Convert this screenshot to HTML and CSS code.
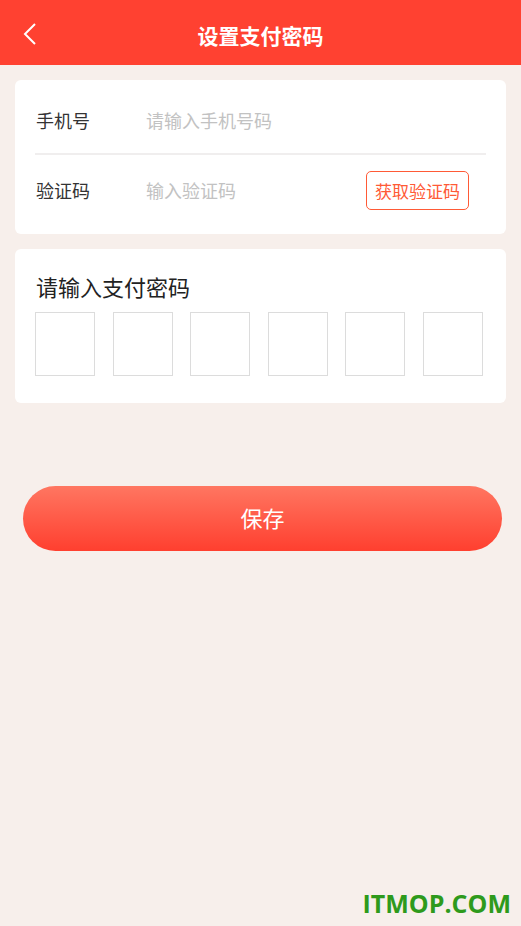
FILE: index.html
```html
<!DOCTYPE html>
<html lang="zh-CN">

<head>
  <meta charset="UTF-8">
  <meta name="viewport" content="width=device-width, initial-scale=1.0">
  <title>设置支付密码</title>
  <link rel="stylesheet" href="styles.css">
</head>

<body>
  <div class="header">
    <a class="back" href="#">
      <svg width="14" height="22" viewBox="0 0 14 22">
        <path d="M12 1 L2 11 L12 21" fill="none" stroke="#fff" stroke-width="2"/>
      </svg>
    </a>
    <h1>设置支付密码</h1>
  </div>

  <div class="card form">
    <div class="row">
      <label for="phone">手机号</label>
      <input type="text" id="phone" placeholder="请输入手机号码">
    </div>
    <div class="row">
      <label for="code">验证码</label>
      <input type="text" id="code" placeholder="输入验证码">
      <button class="code-btn">获取验证码</button>
    </div>
  </div>

  <div class="card pwd">
    <h2>请输入支付密码</h2>
    <div class="boxes">
      <input type="password" maxlength="1">
      <input type="password" maxlength="1">
      <input type="password" maxlength="1">
      <input type="password" maxlength="1">
      <input type="password" maxlength="1">
      <input type="password" maxlength="1">
    </div>
  </div>

  <button class="save">保存</button>

  <div class="mark">ITMOP.COM</div>
</body>

</html>
```

FILE: styles.css
```css
body {
  margin: 0;
  padding: 0;
  height: 926px;
  background-color: #f7efeb;
  font-family: "Noto Sans CJK SC", "Noto Sans", sans-serif;
  position: relative;
}

.header {
  height: 65px;
  background-color: #ff4131;
  display: flex;
  align-items: center;
  justify-content: center;
  position: relative;
}

.back {
  position: absolute;
  left: 23px;
  top: 23px;
}

h1 {
  margin: 0;
  color: #fff;
  font-size: 21px;
  font-weight: bold;
  padding-top: 4px;
}

.card {
  background-color: #fff;
  margin: 15px 15px 0;
  border-radius: 6px;
}

.form {
  padding: 7px 20px 9px;
}

.row {
  height: 66px;
  display: flex;
  align-items: center;
  padding-left: 1px;
}

.row + .row {
  border-top: 2px solid #f0eeee;
  height: 70px;
}

.row label {
  width: 110px;
  font-size: 18px;
  color: #333;
}

.row input {
  flex: 1;
  border: none;
  outline: none;
  font-size: 18px;
  font-family: inherit;
  padding: 0;
  color: #333;
}

.row input::placeholder {
  color: #c2c2c2;
}

.code-btn {
  width: 103px;
  height: 39px;
  margin-right: 17px;
  border: 1.5px solid #ff5a36;
  border-radius: 5px;
  background-color: #fff;
  color: #ff5a36;
  font-size: 17px;
  font-family: inherit;
  padding: 0;
}

.pwd {
  padding: 21px 23px 27px 20px;
}

h2 {
  margin: 0 0 10px 1px;
  font-size: 22px;
  font-weight: normal;
  color: #222;
  line-height: 32px;
}

.boxes {
  display: flex;
  justify-content: space-between;
}

.boxes input {
  width: 60px;
  height: 64px;
  box-sizing: border-box;
  border: 1px solid #dcdcdc;
  padding: 0;
  margin: 0;
  outline: none;
  text-align: center;
  font-size: 22px;
}

.save {
  display: block;
  width: 479px;
  height: 65px;
  margin: 83px 0 0 23px;
  padding: 0 0 4px;
  border: none;
  border-radius: 33px;
  background: linear-gradient(#ff7661, #ff3f2f);
  color: #fff;
  font-size: 22px;
  font-family: inherit;
}

.mark {
  position: absolute;
  right: 10px;
  bottom: 6px;
  color: #2e9a1c;
  font-family: "Open Sans", "Liberation Sans", sans-serif;
  font-weight: bold;
  font-size: 25px;
}
```
